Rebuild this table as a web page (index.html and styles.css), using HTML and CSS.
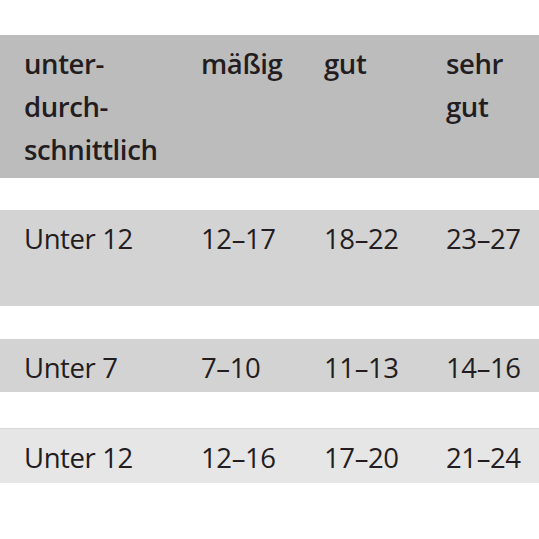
FILE: index.html
```html
<!DOCTYPE html>
<html lang="de">
<head>
<meta charset="utf-8">
<link rel="stylesheet" href="styles.css">
</head>
<body>
<div class="table">
  <div class="row head">
    <div class="cell c1">unter-<br>durch-<br>schnittlich</div>
    <div class="cell c2">mäßig</div>
    <div class="cell c3">gut</div>
    <div class="cell c4">sehr<br>gut</div>
  </div>
  <div class="row r1">
    <div class="cell c1">Unter 12</div>
    <div class="cell c2">12–17</div>
    <div class="cell c3">18–22</div>
    <div class="cell c4">23–27</div>
  </div>
  <div class="row r2">
    <div class="cell c1">Unter 7</div>
    <div class="cell c2">7–10</div>
    <div class="cell c3">11–13</div>
    <div class="cell c4">14–16</div>
  </div>
  <div class="row r3">
    <div class="cell c1">Unter 12</div>
    <div class="cell c2">12–16</div>
    <div class="cell c3">17–20</div>
    <div class="cell c4">21–24</div>
  </div>
</div>
</body>
</html>
```
FILE: styles.css
```css
html, body {
  margin: 0;
  padding: 0;
  background: #ffffff;
}
.table {
  width: 539px;
  padding-top: 35px;
  display: flex;
  flex-direction: column;
  font-family: "Open Sans", sans-serif;
  font-size: 27.5px;
  color: #231c20;
  letter-spacing: -0.4px;
}
.row {
  display: flex;
  line-height: 43px;
}
.cell {
  padding-top: 7px;
}
.c1 { width: 177px; padding-left: 24px; box-sizing: border-box; }
.c2 { width: 123px; padding-left: 24px; box-sizing: border-box; }
.c3 { width: 122px; padding-left: 24px; box-sizing: border-box; }
.c4 { flex: 1; padding-left: 24px; box-sizing: border-box; }
.head {
  background: #bcbcbc;
  font-weight: 600;
  height: 143px;
  margin-bottom: 32px;
}
.r1 {
  background: #d3d3d3;
  height: 96px;
  margin-bottom: 33px;
}
.r2 {
  background: #d3d3d3;
  height: 53px;
  margin-bottom: 36px;
}
.r3 {
  background: #e6e6e6;
  border-top: 1px solid #d8d8d8;
  height: 54px;
}
```
